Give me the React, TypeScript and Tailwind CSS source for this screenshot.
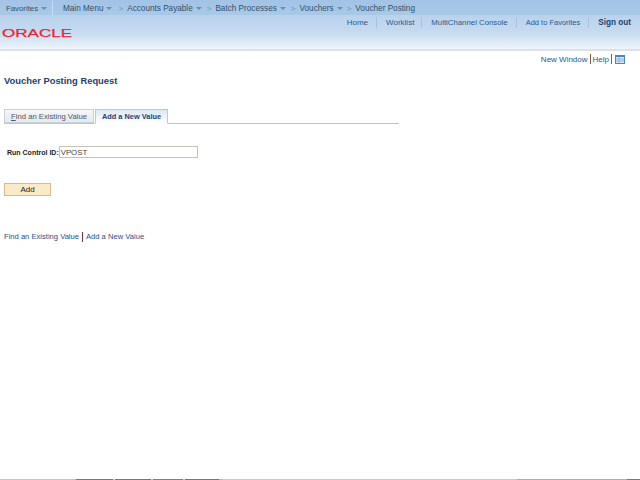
const Tri = () => <span className="block w-0 h-0 border-x-[3px] border-x-transparent border-t-[3px] border-t-[#6f8cab]" />;
const Gt = ({ c }: { c: string }) => <span className={`${c} text-[#6f8fae] text-[8px]`}>&gt;</span>;

export default function App() {
  return (
    <div className="h-[480px] w-[640px] overflow-hidden bg-white flex flex-col font-['Liberation_Sans',Arial,sans-serif] text-[8px] leading-[11px] whitespace-nowrap">
      <div className="h-[15px] shrink-0 flex items-center bg-gradient-to-b from-[#a3c3e6] to-[#a9c9e8] text-[#33506e] text-[8.2px] pt-[1px]">
        <div className="w-[53px] h-[14px] shrink-0 pl-[6px] flex items-center gap-[3px] border-r border-[#c8dcf0]">
          <span className="text-[7.8px]">Favorites</span><Tri />
        </div>
        <div className="pl-[10px] flex items-center">
          <span>Main Menu</span>
          <span className="ml-[2px]"><Tri /></span>
          <Gt c="ml-[7px] mr-[4px]" />
          <span>Accounts Payable</span>
          <span className="ml-[3px]"><Tri /></span>
          <Gt c="ml-[5px] mr-[4px]" />
          <span>Batch Processes</span>
          <span className="ml-[3px]"><Tri /></span>
          <Gt c="ml-[5px] mr-[4px]" />
          <span>Vouchers</span>
          <span className="ml-[3px]"><Tri /></span>
          <Gt c="ml-[4px] mr-[4px]" />
          <span>Voucher Posting</span>
        </div>
      </div>
      <div className="h-[36px] shrink-0 flex justify-between bg-gradient-to-b from-[#b9d2ec] via-[#c6daf0] to-[#eef4fb] border-b-2 border-[#dfe1e6]">
        <svg className="mt-[13px] ml-[2px]" width="71" height="10" viewBox="0 0 71 10">
          <text x="0" y="9" textLength="70" lengthAdjust="spacingAndGlyphs" fontSize="11.5" stroke="#ee2233" strokeWidth="0.25" fill="#ee2233" fontFamily="Liberation Sans">ORACLE</text>
        </svg>
        <div className="flex items-start pt-[2px] pr-[9px] text-[#2a5a94]">
          <span className="pr-[8px] border-r border-[#a9c2dc]">Home</span>
          <span className="pl-[9px] pr-[7px] border-r border-[#a9c2dc]">Worklist</span>
          <span className="pl-[9px] pr-[8px] border-r border-[#a9c2dc] text-[7.8px]">MultiChannel Console</span>
          <span className="pl-[9px] pr-[8px] border-r border-[#a9c2dc] text-[7.5px]">Add to Favorites</span>
          <span className="pl-[9px] font-bold text-[8.2px] text-[#1c3f72]">Sign out</span>
        </div>
      </div>
      <div className="flex justify-end items-center h-[12px] mt-[2px] pr-[15px] text-[#2a5a94] shrink-0">
        <span>New Window</span>
        <span className="w-px h-[10px] bg-[#8a5a4a] mx-[2px]" />
        <span>Help</span>
        <span className="w-px h-[10px] bg-[#8a5a4a] mx-[2px]" />
        <svg className="ml-[1px]" width="10" height="9" viewBox="0 0 10 9">
          <rect x="0.5" y="0.5" width="9" height="8" fill="#dbe8f6" stroke="#4a85c4" />
          <rect x="0" y="0" width="10" height="2" fill="#4a85c4" />
          <path d="M1 4H9M1 6H9M4 2V8" stroke="#8fb2d8" />
        </svg>
      </div>
      <h1 className="mt-[9px] ml-[4px] text-[#1f3f70] font-bold text-[9.4px] leading-[14px]">Voucher Posting Request</h1>
      <div className="mt-[21px] ml-[4px] w-[395px] flex items-end h-[14px] gap-[1px] border-b border-[#b9c6d6] box-content">
        <div className="w-[90px] h-[14px] flex items-center justify-center bg-gradient-to-b from-[#f5f6f7] to-[#e6e8ea] border border-[#c9d2dc] text-[#4d5a68] text-[7.7px]"><span><u>F</u>ind an Existing Value</span></div>
        <div className="w-[73px] h-[15px] -mb-px flex items-center justify-center border border-[#b7c9dd] border-b-white text-[#1f3f70] font-bold bg-gradient-to-b from-[#dbe7f4] to-white text-[7.4px]"><span>Add a New Value</span></div>
      </div>
      <div className="mt-[22px] ml-[7px] flex items-center">
        <label className="font-bold text-[#222] text-[7px]">Run Control ID:</label>
        <div className="w-[139px] h-[12px] border border-[#c3c3b8] pl-[1px] flex items-center text-[#444] text-[7.8px]">VPOST</div>
      </div>
      <button className="mt-[25px] ml-[4px] w-[47px] h-[13px] bg-[#faeac8] border border-[#e0b98a] text-[#222] flex items-center justify-center">Add</button>
      <div className="mt-[35px] ml-[4px] flex items-center text-[#1f4f8f] text-[7.6px]">
        <span>Find an Existing Value</span>
        <span className="w-px h-[10px] bg-[#7a3040] mx-[3px]" />
        <span>Add a New Value</span>
      </div>
      <div className="mt-auto h-px flex shrink-0">
        <div className="w-[76px] bg-[#b8c8d6]" />
        <div className="w-[37px] bg-[#777]" />
        <div className="w-[2px] bg-[#c8d4de]" />
        <div className="w-[36px] bg-[#777]" />
        <div className="w-[2px] bg-[#c8d4de]" />
        <div className="w-[30px] bg-[#808080]" />
        <div className="w-[2px] bg-[#c8d4de]" />
        <div className="w-[34px] bg-[#777]" />
        <div className="w-[4px] bg-[#b0b8c0]" />
        <div className="w-[294px] bg-[#c0cfdb]" />
        <div className="w-[110px] bg-[#a4b0ba]" />
        <div className="w-[13px] bg-[#777]" />
      </div>
    </div>
  );
}
